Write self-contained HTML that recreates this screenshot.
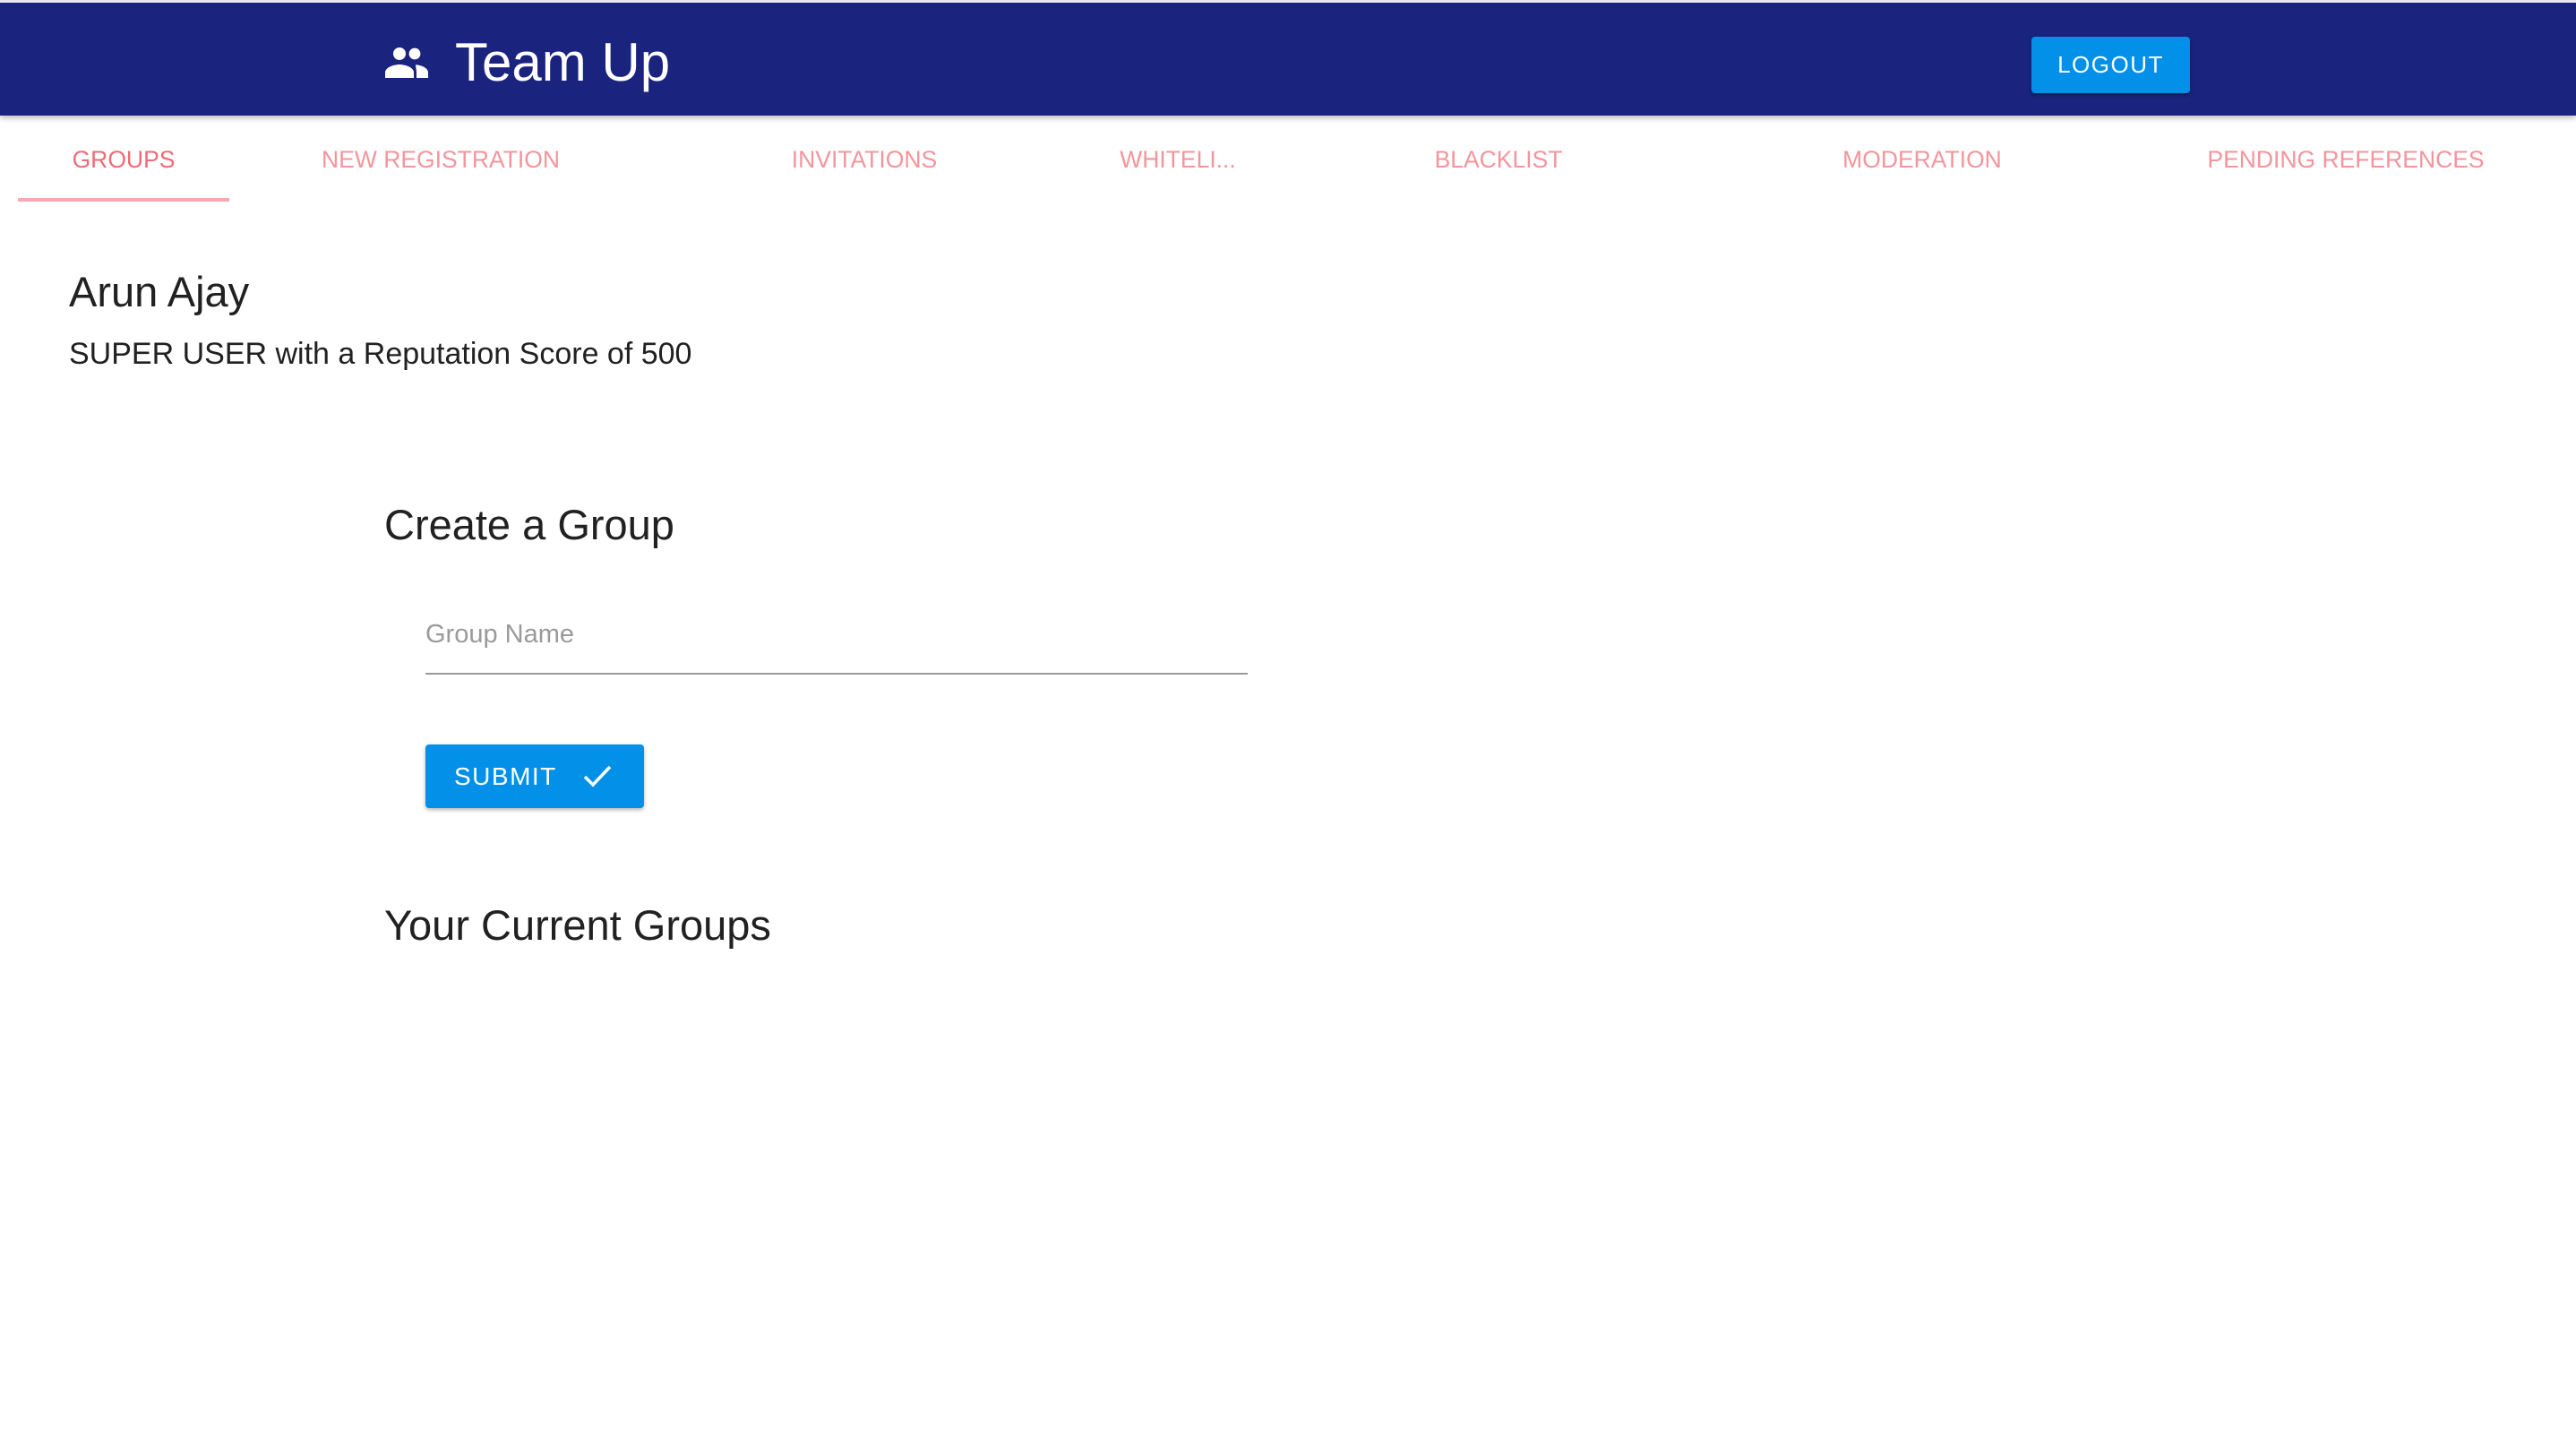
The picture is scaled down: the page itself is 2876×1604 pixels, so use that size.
<!DOCTYPE html>
<html><head><meta charset="utf-8"><style>
*{margin:0;padding:0;box-sizing:border-box}
body{width:2876px;height:1604px;background:#fff;font-family:"Liberation Sans",Arial,sans-serif;position:relative;overflow:hidden}
.hdr{position:absolute;left:0;top:0;width:2876px;height:129px;background:#1a237e;border-top:3px solid #e8e8ee;box-shadow:0 3px 6px rgba(0,0,0,.25)}
.title{position:absolute;left:508px;top:32px;font-size:60px;color:#fff;line-height:70px}
.icon{position:absolute;left:430px;top:48px}
.logout{position:absolute;left:2268px;top:38px;width:177px;height:63px;background:#0390e8;border-radius:4px;color:#fff;font-size:26px;letter-spacing:1.5px;text-align:center;line-height:63px;box-shadow:0 2px 5px rgba(0,0,0,.35)}
.tab{position:absolute;top:162px;font-size:26.5px;color:#f3959c;transform:translateX(-50%);white-space:nowrap;line-height:32px}
.ind{position:absolute;left:20px;top:221px;width:236px;height:4px;background:#f5aab0}
.t{position:absolute;color:#212121;white-space:nowrap}
</style></head><body>
<div class="hdr">
<svg class="icon" width="48" height="36" viewBox="0 0 24 18"><circle cx="8" cy="4.5" r="3.5" fill="#fff"/><circle cx="16.5" cy="4.5" r="3.2" fill="#fff"/><path d="M0 18v-3c0-3 5-4.5 8-4.5s8 1.5 8 4.5v3z" fill="#fff"/><path d="M17 10.6c2.8.2 7 1.6 7 4.4v3h-6.5v-3c0-1.8-.5-3.3-.5-4.4z" fill="#fff"/></svg>
<div class="title">Team Up</div>
<div class="logout">LOGOUT</div>
</div>
<div class="tab" style="left:138px;color:#ef6b76">GROUPS</div>
<div class="tab" style="left:492px">NEW REGISTRATION</div>
<div class="tab" style="left:965px">INVITATIONS</div>
<div class="tab" style="left:1315px">WHITELI...</div>
<div class="tab" style="left:1673px">BLACKLIST</div>
<div class="tab" style="left:2146px">MODERATION</div>
<div class="tab" style="left:2619px">PENDING REFERENCES</div>
<div class="ind"></div>
<div class="t" style="left:77px;top:298px;font-size:47px">Arun Ajay</div>
<div class="t" style="left:77px;top:376px;font-size:34px">SUPER USER with a Reputation Score of 500</div>
<div class="t" style="left:429px;top:558px;font-size:47px">Create a Group</div>
<div class="t" style="left:475px;top:692px;font-size:29px;color:#9a9a9a">Group Name</div>
<div style="position:absolute;left:475px;top:751px;width:918px;height:2px;background:#9a9a9a"></div>
<div style="position:absolute;left:475px;top:831px;width:244px;height:71px;background:#0390e8;border-radius:4px;box-shadow:0 2px 5px rgba(0,0,0,.3);color:#fff;font-size:28px;letter-spacing:1.5px;line-height:71px;padding-left:32px">SUBMIT
<svg style="position:absolute;left:175px;top:21px" width="34" height="30" viewBox="0 0 34 30"><path d="M3 15l9 9L31 4" stroke="#fff" stroke-width="3.5" fill="none"/></svg></div>
<div class="t" style="left:429px;top:1005px;font-size:47px">Your Current Groups</div>
</body></html>
